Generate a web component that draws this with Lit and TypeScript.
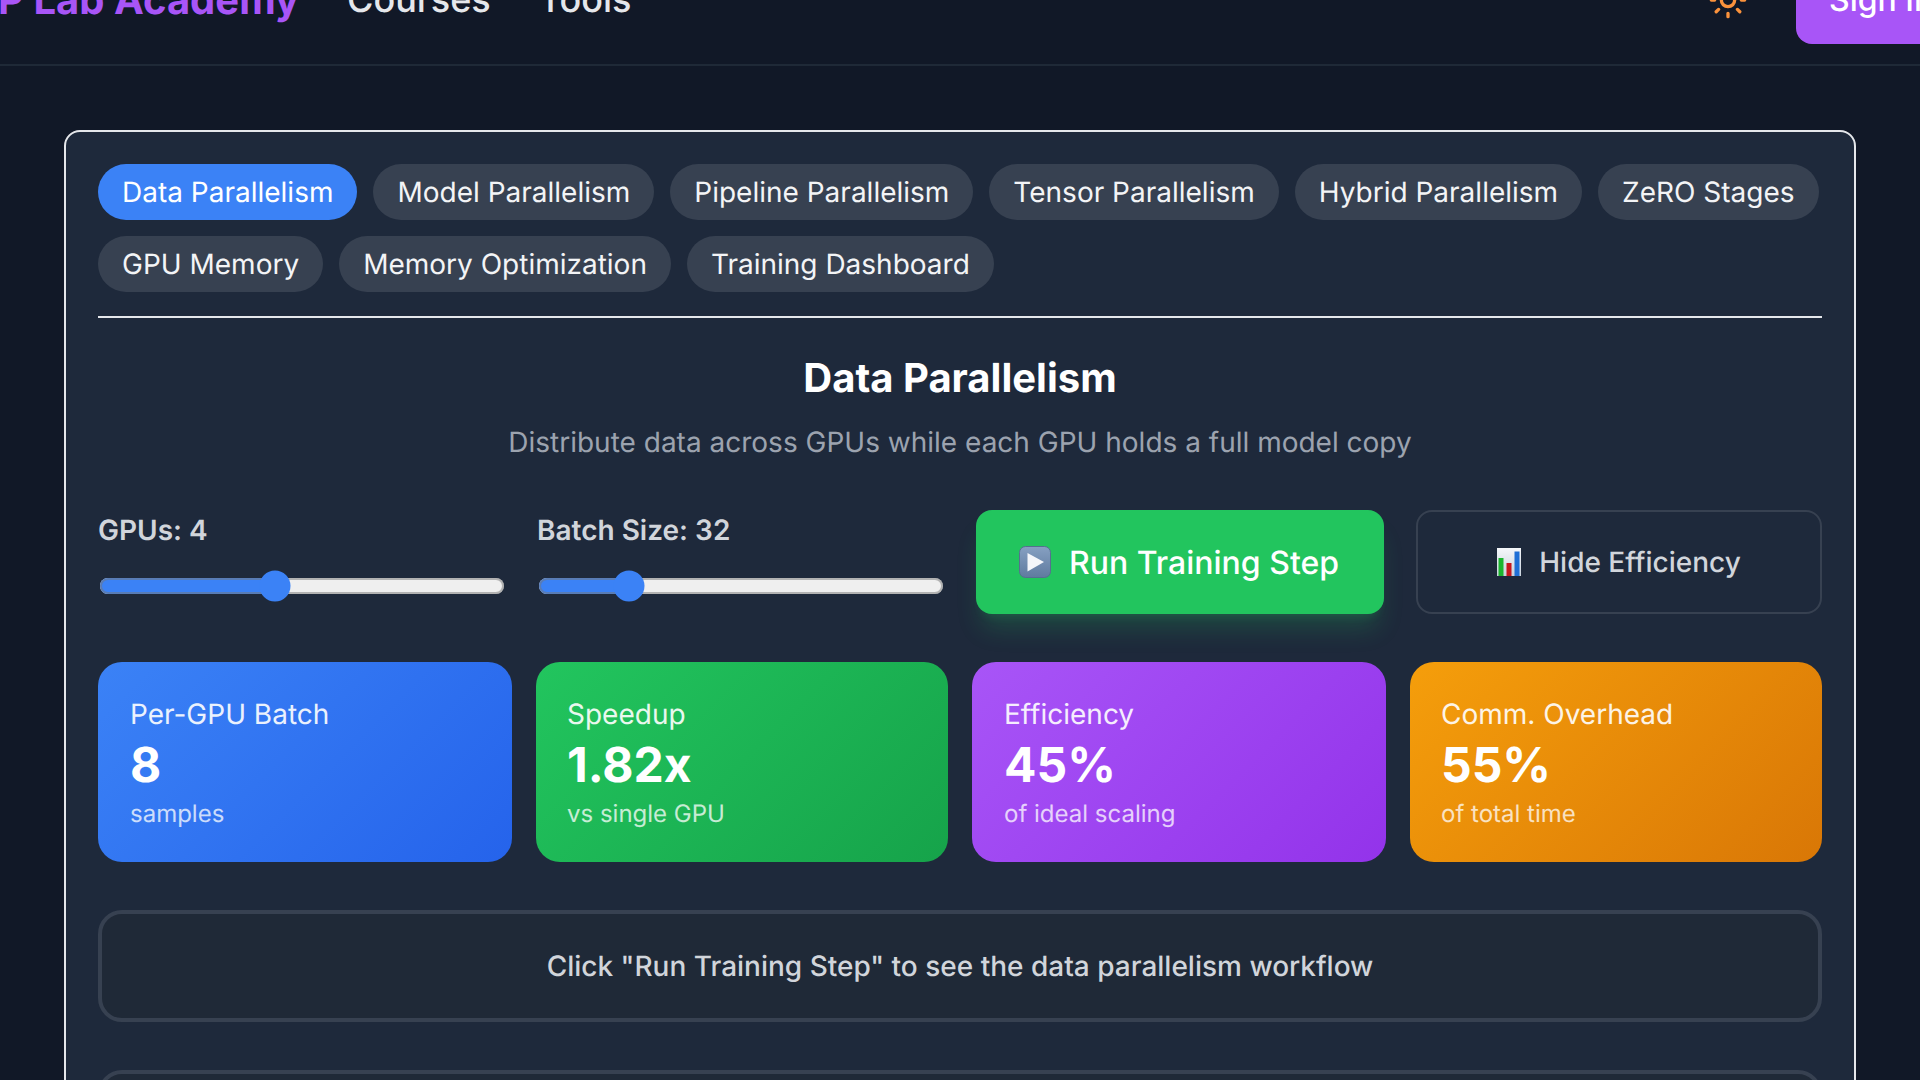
import { LitElement, html, css } from 'lit'
import { customElement, state } from 'lit/decorators.js'

const TABS = [
  'Data Parallelism',
  'Model Parallelism',
  'Pipeline Parallelism',
  'Tensor Parallelism',
  'Hybrid Parallelism',
  'ZeRO Stages',
  'GPU Memory',
  'Memory Optimization',
  'Training Dashboard',
]

const STATS = [
  { cls: 'blue', label: 'Per-GPU Batch', value: '8', sub: 'samples' },
  { cls: 'green', label: 'Speedup', value: '1.82x', sub: 'vs single GPU' },
  { cls: 'purple', label: 'Efficiency', value: '45%', sub: 'of ideal scaling' },
  { cls: 'orange', label: 'Comm. Overhead', value: '55%', sub: 'of total time' },
]

@customElement('app-root')
export class AppRoot extends LitElement {
  static styles = css`
    :host {
      display: block;
      height: 1080px;
      overflow: hidden;
      background: #111827;
      font-family: Inter, 'Liberation Sans', sans-serif;
      text-rendering: geometricPrecision;
      color: #fff;
    }

    .nav {
      display: flex;
      align-items: center;
      box-sizing: border-box;
      height: 128px;
      margin-top: -62px;
      padding-top: 6px;
      border-bottom: 2px solid #1f2937;
      background: #111827;
      overflow: hidden;
    }

    .logo {
      margin: 0 0 10px -55px;
      font-size: 40px;
      font-weight: 700;
      color: #a855f7;
      white-space: nowrap;
    }

    .nav-link {
      margin: 0 0 10px 48px;
      font-size: 36px;
      font-weight: 500;
      color: #e5e7eb;
    }

    .spacer {
      flex: 1;
    }

    .theme {
      display: flex;
      width: 40px;
      height: 40px;
      margin: 0 48px 8px 0;
      color: #fb923c;
    }

    .sign-in {
      flex: none;
      box-sizing: border-box;
      width: 160px;
      height: 80px;
      margin-right: -36px;
      padding: 0 33px 10px;
      display: flex;
      align-items: center;
      border-radius: 16px;
      background: #a855f7;
      font-size: 32px;
      font-weight: 500;
      white-space: nowrap;
    }

    .main {
      padding: 64px 64px 0;
    }

    .card {
      box-sizing: border-box;
      padding: 32px;
      border: 2px solid #e5e7eb;
      border-radius: 16px;
      background: #1e293b;
    }

    .tabs {
      display: flex;
      flex-wrap: wrap;
      gap: 16px;
      padding-bottom: 24px;
      border-bottom: 2px solid #e5e7eb;
    }

    .tab {
      padding: 8px 24px;
      border-radius: 28px;
      background: #374151;
      font-size: 28px;
      font-weight: 400;
      line-height: 40px;
      color: #f3f4f6;
    }

    .tab.active {
      background: #3b82f6;
      color: #fff;
    }

    h2 {
      margin: 32px 0 16px;
      font-size: 40px;
      font-weight: 700;
      line-height: 56px;
      text-align: center;
    }

    .subtitle {
      margin: 0 0 48px;
      font-size: 28px;
      line-height: 40px;
      text-align: center;
      color: #9ca3af;
    }

    .controls {
      display: grid;
      grid-template-columns: 407px 407px 408px 406px;
      gap: 32px;
      margin-bottom: 48px;
    }

    .slider label {
      display: block;
      font-size: 28px;
      font-weight: 600;
      line-height: 40px;
      color: #d1d5db;
    }

    .slider input {
      display: block;
      zoom: 2;
      width: calc(100% - 0.5px);
      margin: 10px 0 0 0.5px;
      accent-color: #3b82f6;
    }

    .btn {
      display: flex;
      align-items: center;
      justify-content: center;
      height: 104px;
      box-sizing: border-box;
      border-radius: 16px;
      white-space: nowrap;
    }

    .run {
      gap: 18px;
      padding-right: 2px;
      background: #22c55e;
      box-shadow: 0 20px 25px -5px rgba(34, 197, 94, 0.2), 0 8px 10px -6px rgba(34, 197, 94, 0.2);
      font-size: 32px;
      font-weight: 500;
      color: #fff;
    }

    .ghost {
      gap: 18px;
      border: 2px solid #374151;
      font-size: 28px;
      font-weight: 500;
      color: #d1d5db;
    }

    .stats {
      display: grid;
      grid-template-columns: 414px 412px 414px 412px;
      gap: 24px;
      margin-bottom: 48px;
    }

    .stat {
      padding: 32px;
      border-radius: 24px;
    }

    .stat.blue { background: linear-gradient(135deg, #3b82f6, #2563eb); }
    .stat.green { background: linear-gradient(135deg, #22c55e, #16a34a); padding-left: 31px; }
    .stat.purple { background: linear-gradient(135deg, #a855f7, #9333ea); }
    .stat.orange { background: linear-gradient(135deg, #f59e0b, #d97706); padding-left: 31px; }

    .stat-label {
      font-size: 28px;
      line-height: 40px;
      opacity: 0.9;
    }

    .stat-value {
      margin-bottom: 2px;
      font-size: 48px;
      font-weight: 700;
      line-height: 62px;
    }

    .stat-sub {
      font-size: 24px;
      line-height: 32px;
      opacity: 0.75;
    }

    .panel {
      box-sizing: border-box;
      height: 112px;
      margin-bottom: 48px;
      display: flex;
      align-items: center;
      justify-content: center;
      border: 4px solid #374151;
      border-radius: 24px;
      background: #1f2937;
      font-size: 28px;
      font-weight: 500;
      color: #d1d5db;
    }
  `

  @state() private gpus = 4
  @state() private batchSize = 32

  private renderSun() {
    return html`<svg class="theme" viewBox="0 0 24 24" fill="none" stroke="currentColor" stroke-width="2" stroke-linecap="round" stroke-linejoin="round">
      <circle cx="12" cy="12" r="4"></circle>
      <path d="M12 2v2M12 20v2m-7.07-17.07 1.41 1.41m11.32 11.32 1.41 1.41M2 12h2m16 0h2M6.34 17.66l-1.41 1.41M19.07 4.93l-1.41 1.41"></path>
    </svg>`
  }

  private renderPlayEmoji() {
    return html`<svg width="32" height="32" viewBox="0 0 32 32">
      <defs>
        <linearGradient id="play" x1="0" y1="0" x2="0" y2="1">
          <stop offset="0" stop-color="#86a0c2"></stop>
          <stop offset="1" stop-color="#5f7b9f"></stop>
        </linearGradient>
      </defs>
      <rect x="0.5" y="0.5" width="31" height="31" rx="6" fill="url(#play)" stroke="#55708f"></rect>
      <path d="M8.5 7 25 16 8.5 25.5Z" fill="#f4f6fa"></path>
    </svg>`
  }

  private renderChartEmoji() {
    return html`<svg width="24" height="28" viewBox="0 0 24 28">
      <defs>
        <linearGradient id="paper" x1="0" y1="0" x2="0" y2="1">
          <stop offset="0" stop-color="#f5f7fa"></stop>
          <stop offset="1" stop-color="#c9d2dc"></stop>
        </linearGradient>
      </defs>
      <rect width="24" height="28" fill="url(#paper)"></rect>
      <rect x="1.5" y="10" width="5" height="18" fill="#1cb52e"></rect>
      <rect x="9.5" y="15" width="5" height="13" fill="#c8161d"></rect>
      <rect x="17.5" y="3.5" width="5" height="24.5" fill="#1f6fd6"></rect>
    </svg>`
  }

  render() {
    return html`
      <div class="nav">
        <div class="logo">NLP Lab Academy</div>
        <div class="nav-link">Courses</div>
        <div class="nav-link">Tools</div>
        <div class="spacer"></div>
        ${this.renderSun()}
        <div class="sign-in">Sign In</div>
      </div>
      <div class="main">
        <div class="card">
          <div class="tabs">
            ${TABS.map((t, i) => html`<div class="tab ${i === 0 ? 'active' : ''}">${t}</div>`)}
          </div>
          <h2>Data Parallelism</h2>
          <p class="subtitle">Distribute data across GPUs while each GPU holds a full model copy</p>
          <div class="controls">
            <div class="slider">
              <label>GPUs: ${this.gpus}</label>
              <input type="range" min="1" max="8" .value=${String(this.gpus)} />
            </div>
            <div class="slider">
              <label>Batch Size: ${this.batchSize}</label>
              <input type="range" min="8" max="128" step="8" .value=${String(this.batchSize)} />
            </div>
            <div class="btn run">${this.renderPlayEmoji()}<span>Run Training Step</span></div>
            <div class="btn ghost">${this.renderChartEmoji()}<span>Hide Efficiency</span></div>
          </div>
          <div class="stats">
            ${STATS.map(s => html`
              <div class="stat ${s.cls}">
                <div class="stat-label">${s.label}</div>
                <div class="stat-value">${s.value}</div>
                <div class="stat-sub">${s.sub}</div>
              </div>
            `)}
          </div>
          <div class="panel">Click "Run Training Step" to see the data parallelism workflow</div>
          <div class="panel"></div>
        </div>
      </div>
    `
  }
}

declare global {
  interface HTMLElementTagNameMap {
    'app-root': AppRoot
  }
}
